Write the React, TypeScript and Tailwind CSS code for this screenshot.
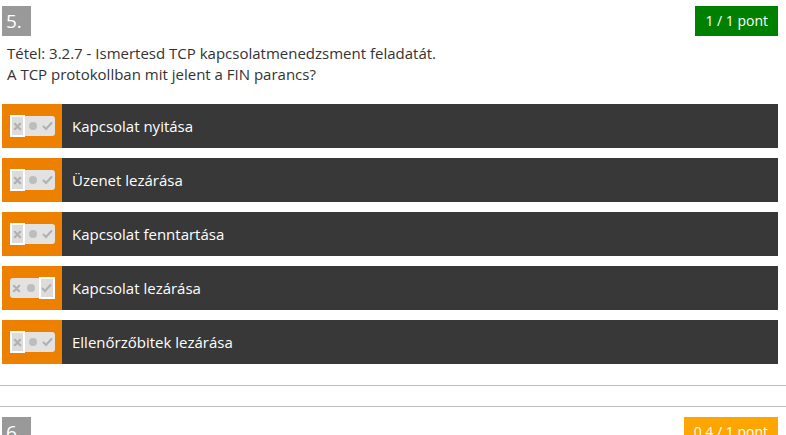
import React from 'react';

type Answer = { text: string; state: 'no' | 'none' | 'yes' };

const answers: Answer[] = [
  { text: 'Kapcsolat nyitása', state: 'no' },
  { text: 'Üzenet lezárása', state: 'no' },
  { text: 'Kapcsolat fenntartása', state: 'no' },
  { text: 'Kapcsolat lezárása', state: 'yes' },
  { text: 'Ellenőrzőbitek lezárása', state: 'no' },
];

const Toggle = ({ state }: { state: Answer['state'] }) => {
  const seg = (active: boolean, children: React.ReactNode) => (
    <div
      className={`h-[20px] flex items-center justify-center ${
        active ? 'border-2 border-white bg-[#dcdcdc] w-[16px] h-[22px]' : 'w-[15px]'
      }`}
    >
      {children}
    </div>
  );
  return (
    <div className="flex items-center h-[20px] w-[45px] bg-[#e2e2e2] rounded-[3px]">
      {seg(
        state === 'no',
        <svg width="9" height="9" viewBox="0 0 10 10">
          <path d="M2 2 L8 8 M8 2 L2 8" stroke="#b0b0b0" strokeWidth="2.4" strokeLinecap="round" />
        </svg>
      )}
      {seg(state === 'none', <div className="w-[8px] h-[8px] rounded-full bg-[#bdbdbd]" />)}
      {seg(
        state === 'yes',
        <svg width="11" height="10" viewBox="0 0 11 10">
          <path d="M1.5 5.5 L4 8 L9.5 2" stroke="#b0b0b0" strokeWidth="2" fill="none" strokeLinecap="round" />
        </svg>
      )}
    </div>
  );
};

export default function App() {
  return (
    <div className="w-[786px] h-[435px] overflow-hidden bg-white font-['Open_Sans',sans-serif] text-[#333]">
      {/* Question 5 */}
      <div className="pl-[2px] pr-[8px] pt-[6px]">
        <div className="flex justify-between items-start">
          <div className="w-[29px] h-[30px] bg-[#999] text-white text-[19px] leading-[30px] pl-[4px]">5.</div>
          <div className="h-[30px] px-[10px] bg-[#008000] text-white text-[14px] leading-[30px]">1 / 1 pont</div>
        </div>
        <div className="mt-[7px] ml-[5px] text-[15px] leading-[21px]">
          <div>Tétel: 3.2.7 - Ismertesd TCP kapcsolatmenedzsment feladatát.</div>
          <div>A TCP protokollban mit jelent a FIN parancs?</div>
        </div>
        <div className="mt-[19px] flex flex-col gap-[10px]">
          {answers.map((a) => (
            <div key={a.text} className="flex h-[44px] bg-[#383838]">
              <div className="w-[60px] bg-[#ee8000] flex items-center justify-center shrink-0">
                <Toggle state={a.state} />
              </div>
              <div className="pl-[10px] flex items-center text-white text-[15px]">{a.text}</div>
            </div>
          ))}
        </div>
      </div>
      <div className="mt-[21px] border-t border-[#bbb]" />
      <div className="mt-[20px] border-t border-[#bbb]" />
      {/* Question 6 */}
      <div className="pl-[2px] pr-[8px] pt-[10px]">
        <div className="flex justify-between items-start">
          <div className="w-[29px] h-[30px] bg-[#999] text-white text-[19px] leading-[30px] pl-[4px]">6.</div>
          <div className="h-[30px] px-[10px] bg-[#ffa500] text-white text-[14px] leading-[30px]">0.4 / 1 pont</div>
        </div>
      </div>
    </div>
  );
}
